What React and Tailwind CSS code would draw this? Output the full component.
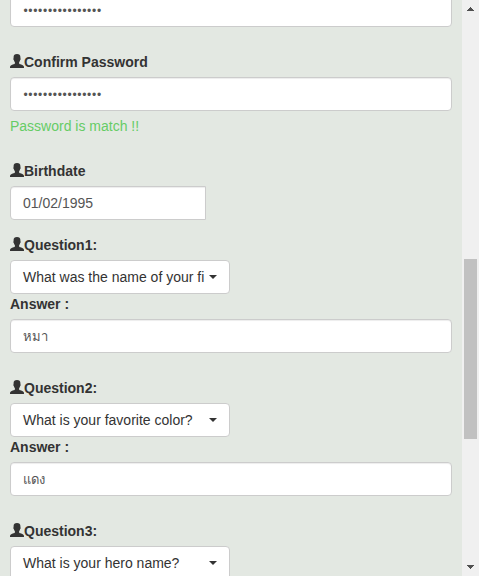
import React from "react";

function UserIcon() {
  return (
    <svg
      width="14"
      height="14"
      viewBox="0 0 14 14"
      className="mt-0.5 h-3.5 w-3.5 shrink-0 fill-[#333333]"
      aria-hidden="true"
    >
      <path d="M7 0C9.3 0 10.4 1.2 10.4 3.1V4.2C10.8 4.4 10.7 5.7 10.2 6C10 7 9.6 7.8 9.1 8.3V9.2C9.2 9.9 9.7 10 10.6 10.3C12.4 11 13.5 11.6 13.8 12.3C14 12.8 14 13.5 14 14H0C0 13.5 0 12.8 0.2 12.3C0.5 11.6 1.6 11 3.4 10.3C4.3 10 4.8 9.9 4.9 9.2V8.3C4.4 7.8 4 7 3.8 6C3.3 5.7 3.2 4.4 3.6 4.2V3.1C3.6 1.2 4.7 0 7 0Z" />
    </svg>
  );
}

function Label({ icon = true, children }) {
  return (
    <label className="mb-[5px] flex h-5 font-bold leading-5">
      {icon && <UserIcon />}
      <span>{children}</span>
    </label>
  );
}

function Field({ className = "w-full rounded", children }) {
  return (
    <div
      className={`h-[34px] border border-[#cccccc] bg-white px-3 py-1.5 leading-5 text-[#555555] shadow-[inset_0_1px_1px_rgba(0,0,0,0.075)] ${className}`}
    >
      {children}
    </div>
  );
}

function Select({ children }) {
  return (
    <div className="flex h-[34px] w-[220px] items-center rounded border border-[#cccccc] bg-white px-3">
      <span className="w-[182px] whitespace-nowrap leading-5">{children}</span>
      <span className="ml-1 h-0 w-0 border-x-4 border-t-4 border-x-transparent border-t-[#333333]" />
    </div>
  );
}

function Question({ title, question, answer }) {
  return (
    <div className="mb-[25px]">
      <Label>{title}</Label>
      <Select>{question}</Select>
      <Label icon={false}>Answer :</Label>
      <Field>
        <span className="block pt-px text-[13px]/5">{answer}</span>
      </Field>
    </div>
  );
}

function Scrollbar() {
  return (
    <div className="flex w-[17px] shrink-0 flex-col items-center bg-[#f0f0f0]">
      <svg width="17" height="17" shapeRendering="crispEdges" className="shrink-0 fill-[#505050]">
        <path d="M8 7h1v1h1v1h1v1h1v1H5v-1h1V9h1V8h1z" />
      </svg>
      <div className="mt-[242px] h-[180px] w-[13px] bg-[#c1c1c1]" />
      <svg width="17" height="17" shapeRendering="crispEdges" className="mt-auto shrink-0 fill-[#505050]">
        <path d="M5 6h7v1h-1v1h-1v1H9v1H8V9H7V8H6V7H5z" />
      </svg>
    </div>
  );
}

function PasswordDots() {
  return (
    <span className="block pl-[0.4px] pt-px text-[12px]/5 tracking-[0.7px]">
      {"•".repeat(16)}
    </span>
  );
}

export default function App() {
  return (
    <div className="flex h-[576px] w-[479px] overflow-hidden bg-[#e3e8e2] font-['Liberation_Sans',Arial,sans-serif] text-[14px] leading-5 text-[#333333]">
      <main className="-mt-[7px] min-w-0 flex-1 px-2.5">
        <Field>
          <PasswordDots />
        </Field>
        <div className="mt-[25px]">
          <Label>Confirm Password</Label>
          <Field>
            <PasswordDots />
          </Field>
          <p className="mt-[5px] text-[#66cc66]">Password is match !!</p>
        </div>
        <div className="mb-[15px] mt-[25px]">
          <Label>Birthdate</Label>
          <Field className="w-[196px] rounded-l">01/02/1995</Field>
        </div>
        <Question title="Question1:" question="What was the name of your fi" answer="หมา" />
        <Question title="Question2:" question="What is your favorite color?" answer="แดง" />
        <Label>Question3:</Label>
        <Select>What is your hero name?</Select>
      </main>
      <Scrollbar />
    </div>
  );
}
